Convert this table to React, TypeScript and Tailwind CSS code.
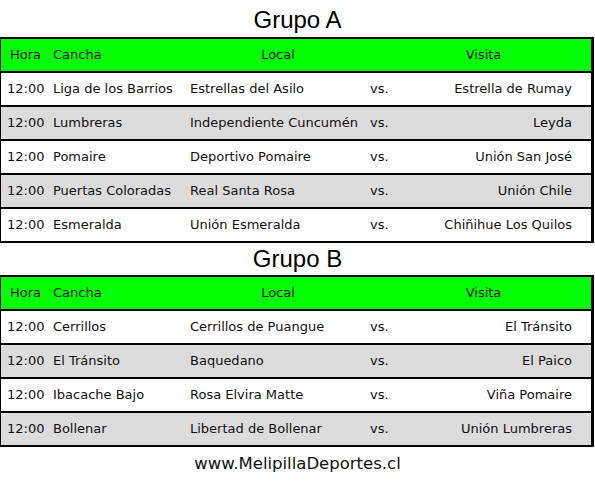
import React from "react";

type Row = [string, string, string];

const grupoA: Row[] = [
  ["Liga de los Barrios", "Estrellas del Asilo", "Estrella de Rumay"],
  ["Lumbreras", "Independiente Cuncumén", "Leyda"],
  ["Pomaire", "Deportivo Pomaire", "Unión San José"],
  ["Puertas Coloradas", "Real Santa Rosa", "Unión Chile"],
  ["Esmeralda", "Unión Esmeralda", "Chiñihue Los Quilos"],
];

const grupoB: Row[] = [
  ["Cerrillos", "Cerrillos de Puangue", "El Tránsito"],
  ["El Tránsito", "Baquedano", "El Paico"],
  ["Ibacache Bajo", "Rosa Elvira Matte", "Viña Pomaire"],
  ["Bollenar", "Libertad de Bollenar", "Unión Lumbreras"],
];

function Title({ text, tall }: { text: string; tall?: boolean }) {
  return (
    <div
      className={`${tall ? "h-[37px] pt-[2px]" : "h-[32px]"} flex items-center justify-center text-[24px] text-black`}
      style={{ fontFamily: '"Liberation Sans", Arial, sans-serif' }}
    >
      {text}
    </div>
  );
}

function Table({ rows }: { rows: Row[] }) {
  return (
    <div className="w-[594px] border-t-[2px] border-l border-r-[3px] border-black">
      <div className="flex h-[34px] items-center bg-[#00ff00] border-b-[2px] border-black text-[#111]">
        <div className="w-[47px] pl-[9px]">Hora</div>
        <div className="w-[138px] pl-[5px]">Cancha</div>
        <div className="w-[184px] text-center">Local</div>
        <div className="flex-1 text-center pl-[6px]">Visita</div>
      </div>
      {rows.map((r, i) => (
        <div
          key={i}
          className={`flex h-[34px] items-center text-[#111] border-b-[2px] border-black ${i % 2 === 1 ? "bg-[#dcdcdc]" : "bg-white"}`}
        >
          <div className="w-[47px] pl-[6px]">12:00</div>
          <div className="w-[138px] pl-[5px]">{r[0]}</div>
          <div className="w-[184px] pl-[4px]">{r[1]}</div>
          <div className="w-[40px]">vs.</div>
          <div className="flex-1 text-right pr-[19px]">{r[2]}</div>
        </div>
      ))}
    </div>
  );
}

export default function App() {
  return (
    <div
      className="w-[595px] h-[481px] bg-white text-[13px]"
      style={{ fontFamily: '"DejaVu Sans", Verdana, sans-serif' }}
    >
      <Title text="Grupo A" tall />
      <Table rows={grupoA} />
      <Title text="Grupo B" />
      <Table rows={grupoB} />
      <div className="h-[34px] flex items-center justify-center text-[16.5px] text-[#111]">
        www.MelipillaDeportes.cl
      </div>
    </div>
  );
}
